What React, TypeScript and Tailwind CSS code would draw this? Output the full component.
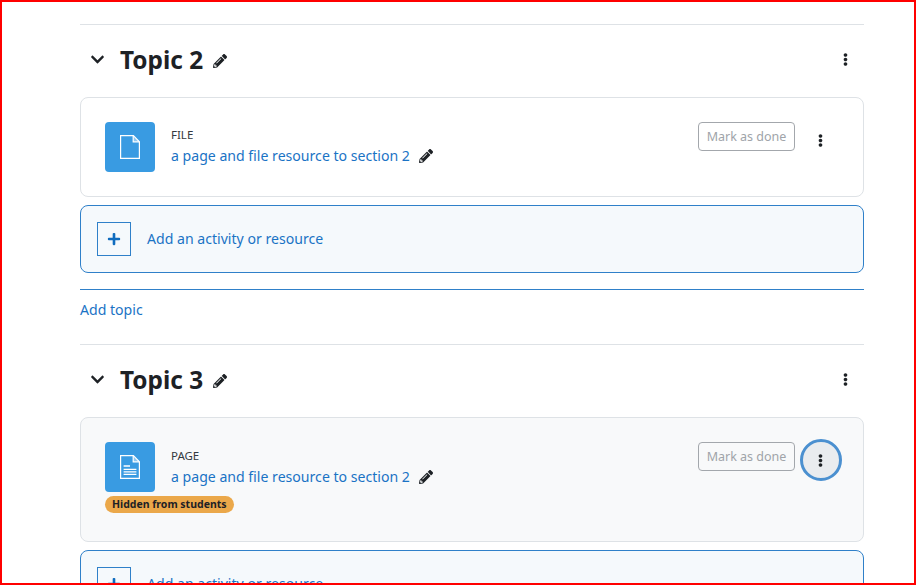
import React from "react";
import { FaChevronDown, FaEllipsisV, FaPencilAlt, FaPlus } from "react-icons/fa";

const FileIcon: React.FC<{ lines?: boolean }> = ({ lines }) => (
  <svg width="24" height="24" viewBox="0 0 24 24" fill="none" stroke="#fff" strokeWidth="1.2">
    <path d="M2.6 0.6h12.8l6 6.2v16.6H2.6z" />
    <path d="M15.2 0.8v6h6" fill="#fff" fillOpacity="0.45" />
    {lines && <path d="M5.6 11h6.4M5.6 14.4h12.8M5.6 16.8h12.8M5.6 19.4h12.8" strokeWidth="1.3" />}
  </svg>
);

const Kebab: React.FC = () => <FaEllipsisV className="text-[#1d2125]" size={13} />;

interface ActivityProps {
  kind: string;
  lines?: boolean;
  hidden?: boolean;
}

const Activity: React.FC<ActivityProps> = ({ kind, lines, hidden }) => (
  <div
    className={`flex justify-between rounded-[8px] border border-[#dee2e6] pl-[24px] pr-[21px] pt-[24px] ${
      hidden ? "h-[125px] bg-[#f8f9fa]" : "h-[100px] bg-white"
    }`}
  >
    <div>
      <div className="flex">
        <div className="flex h-[50px] w-[50px] items-center justify-center rounded-[4px] bg-[#399be2]">
          <FileIcon lines={lines} />
        </div>
        <div className={`ml-[16px] ${hidden ? "pt-[6px]" : "pt-[5px]"}`}>
          <div className="text-[11.5px] leading-[16px] text-[#343a40]">{kind}</div>
          <div className="mt-[2px] flex items-center text-[14.1px] leading-[22px] text-[#1a73c5]">
            a page and file resource to section 2
            <FaPencilAlt className="ml-[9px] text-[#1d2125]" size={14} />
          </div>
        </div>
      </div>
      {hidden && (
        <div className="mt-[4px] w-fit rounded-full bg-[#eba84a] px-[7px] text-[10.5px] font-bold leading-[17px] text-[#1d2125]">
          Hidden from students
        </div>
      )}
    </div>
    <div className="flex h-fit items-start">
      <div className="flex h-[29px] w-[97px] items-center justify-center rounded-[4px] border border-[#a3a7ac] pt-[2px] text-[12.5px] text-[#a0a4a9]">
        Mark as done
      </div>
      <div
        className={`-mt-[3px] ml-[5px] flex h-[42px] w-[42px] items-center justify-center rounded-full pr-[1px] ${
          hidden ? "border-[3px] border-[#4b90d0] bg-[#e9ecef]" : ""
        }`}
      >
        <Kebab />
      </div>
    </div>
  </div>
);

const AddActivity: React.FC = () => (
  <div className="mt-[8px] flex h-[68px] shrink-0 items-center rounded-[8px] border border-[#2f80c9] bg-[#f5f9fc] pl-[16px]">
    <div className="flex h-[34px] w-[34px] items-center justify-center border border-[#2f80c9]">
      <FaPlus className="text-[#0f6cbf]" size={14} />
    </div>
    <span className="ml-[16px] text-[14.1px] text-[#1a73c5]">Add an activity or resource</span>
  </div>
);

const TopicHeader: React.FC<{ title: string }> = ({ title }) => (
  <div className="flex h-[72px] items-center justify-between pb-[3px] pr-[12px]">
    <div className="flex items-center">
      <FaChevronDown className="ml-[10px] text-[#1d2125]" size={15} />
      <h3 className="ml-[15px] text-[24.4px] font-bold leading-[30px] text-[#1d2125]">{title}</h3>
      <FaPencilAlt className="ml-[10px] mt-[3px] text-[#1d2125]" size={14} />
    </div>
    <Kebab />
  </div>
);

export default function App() {
  return (
    <div
      className="h-[585px] w-[916px] overflow-hidden border-2 border-[#ff0000] bg-white"
      style={{ fontFamily: '"Noto Sans", sans-serif' }}
    >
      <div className="ml-[78px] w-[784px] pt-[22px]">
        <section className="border-t border-[#dee2e6]">
          <TopicHeader title="Topic 2" />
          <Activity kind="FILE" />
          <AddActivity />
        </section>
        <div className="mt-[16px] border-t border-[#2f80c9] pb-[24px] pt-[10px] text-[14.1px] leading-[20px] text-[#1a73c5]">
          Add topic
        </div>
        <section className="border-t border-[#dee2e6]">
          <TopicHeader title="Topic 3" />
          <Activity kind="PAGE" lines hidden />
          <AddActivity />
        </section>
      </div>
    </div>
  );
}
